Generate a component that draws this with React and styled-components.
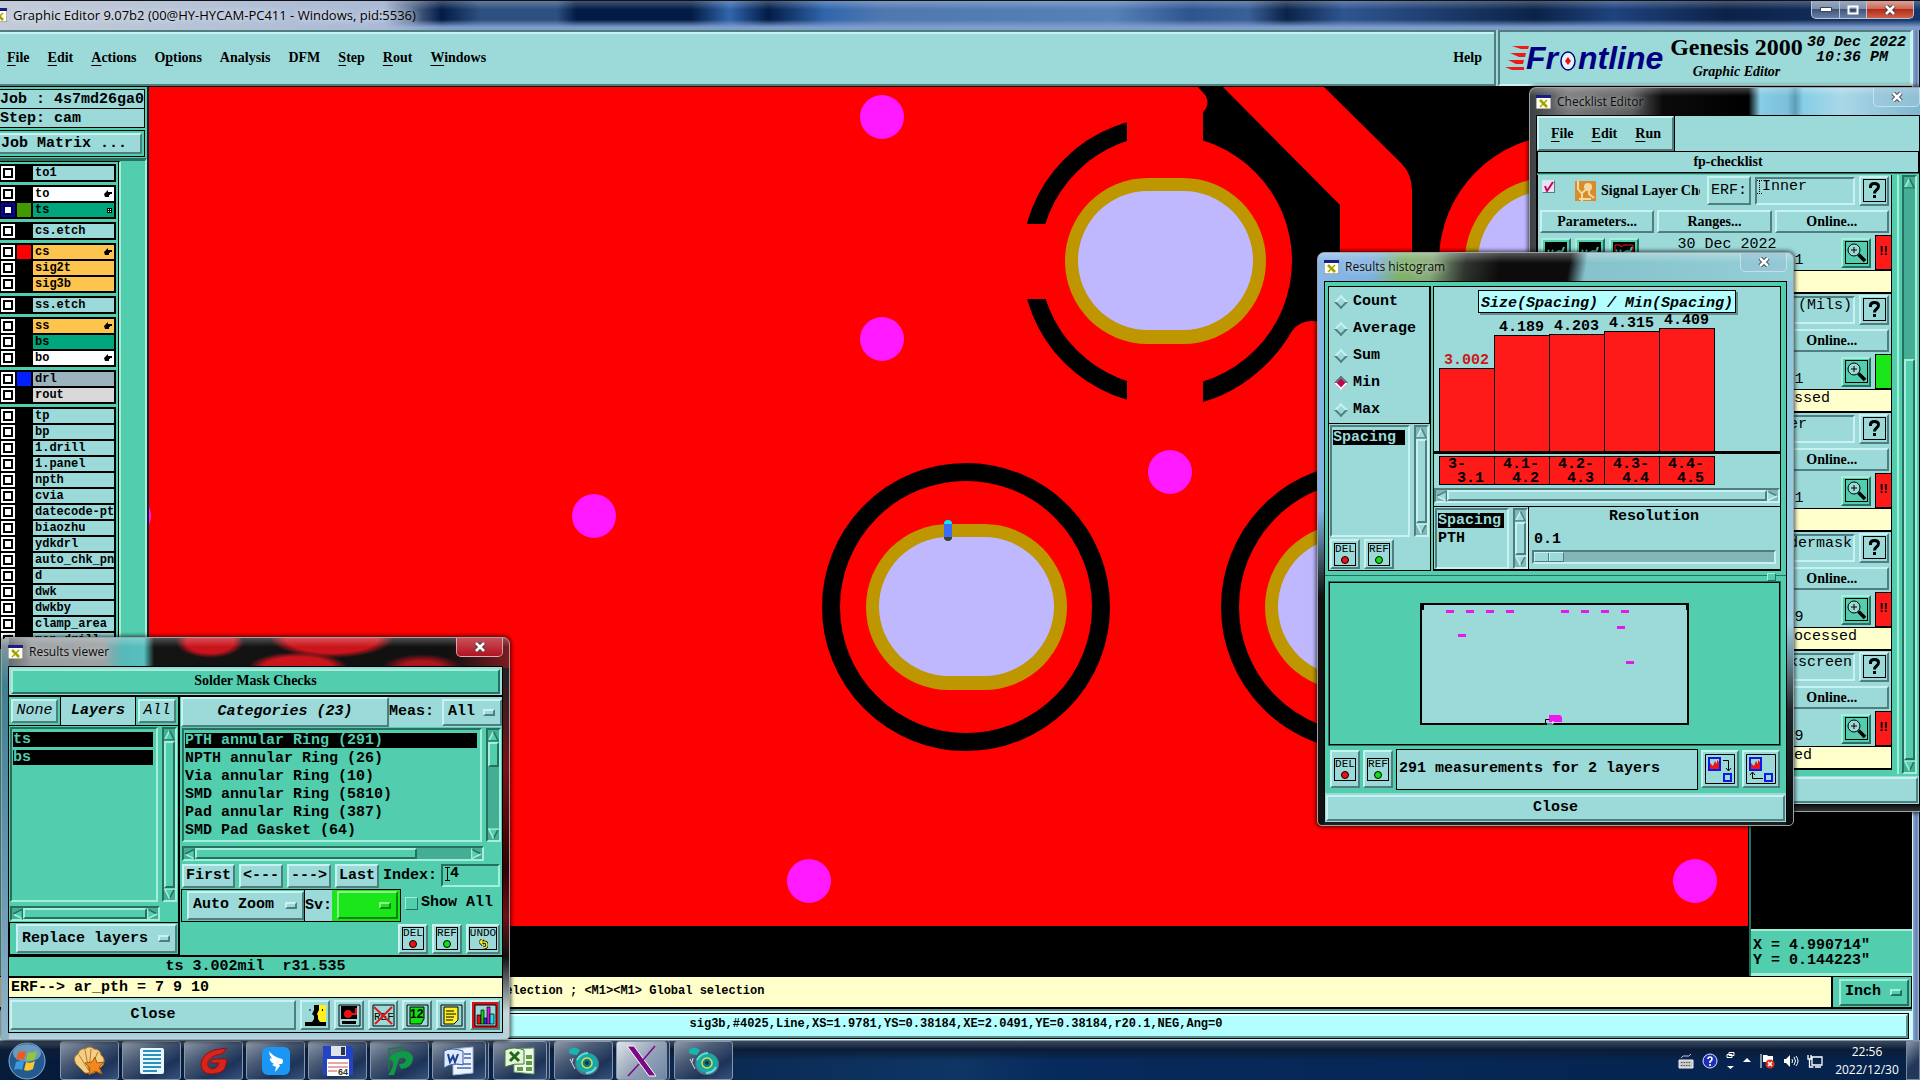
import React from "react";
import styled, { createGlobalStyle, css } from "styled-components";

const SERIF = `"Liberation Serif", serif`;
const MONO = `"Liberation Mono", monospace`;
const UI = `"Open Sans", "Noto Sans", sans-serif`;

const tones = {
  cyan: { bg: "#9cdada", light: "#c8f2f1", dark: "#507e7e", trough: "#83b7b7" },
  green: { bg: "#52cdae", light: "#a3efda", dark: "#27705f", trough: "#45ad93" },
  lime: { bg: "#1ae61a", light: "#8df58d", dark: "#0c860c", trough: "#13b313" },
  ice: { bg: "#b3ffff", light: "#e2ffff", dark: "#5f8f8f", trough: "#8fd0d0" }
};

const tone = p => tones[p.$tone || "cyan"];

const bevel = css`
  background: ${p => tone(p).bg};
  border: 2px solid;
  border-color: ${p =>
    p.$in
      ? `${tone(p).dark} ${tone(p).light} ${tone(p).light} ${tone(p).dark}`
      : `${tone(p).light} ${tone(p).dark} ${tone(p).dark} ${tone(p).light}`};
`;

const mono = css`
  font: bold 15px/18px ${MONO};
`;

const serif = css`
  font: bold 14px/18px ${SERIF};
`;

const GlobalStyle = createGlobalStyle`
  * { box-sizing: border-box; }
  body { margin: 0; overflow: hidden; background: #000; color: #000; }
  button, input, select { margin: 0; padding: 0; color: inherit; font: inherit; border-radius: 0; }
  ul { list-style: none; margin: 0; padding: 0; }
  svg { display: block; flex: none; }
`;

/* ---------- shared controls ---------- */

const Button = styled.button`
  ${bevel};
  ${mono};
  font-style: ${p => (p.$italic ? "italic" : "normal")};
  font-weight: ${p => (p.$thin ? "normal" : "bold")};
  flex: ${p => (p.$w ? "none" : 1)};
  width: ${p => (p.$w ? `${p.$w}px` : "auto")};
  height: ${p => (p.$h ? `${p.$h}px` : "auto")};
  white-space: nowrap;
  display: flex;
  align-items: center;
  justify-content: center;
`;

const SerifButton = styled(Button)`
  ${serif};
`;

const Face = styled.span`
  display: flex;
  flex-direction: column;
  align-items: center;
  width: ${p => (p.$wide ? 28 : 22)}px;
  height: 23px;
  border: 1px solid #000;
  font: 11px/11px ${MONO};
`;

const Dot = styled.i`
  width: 8px;
  height: 8px;
  margin-top: 1px;
  border: 1px solid #000;
  border-radius: 50%;
  background: ${p => p.$color};
`;

function DelButton({ h = 30 }) {
  return (
    <Button $w={30} $h={h}>
      <Face>
        DEL
        <Dot $color="#f01010" />
      </Face>
    </Button>
  );
}

function RefButton({ h = 30 }) {
  return (
    <Button $w={30} $h={h}>
      <Face>
        REF
        <Dot $color="#10e010" />
      </Face>
    </Button>
  );
}

const OptionBox = styled.label`
  ${bevel};
  ${mono};
  display: flex;
  align-items: center;
  gap: 6px;
  padding: 0 5px 0 4px;
  flex: ${p => (p.$w ? "none" : 1)};
  width: ${p => (p.$w ? `${p.$w}px` : "auto")};
  height: ${p => p.$h}px;

  select {
    flex: 1;
    min-width: 0;
    appearance: none;
    border: 0;
    background: none;
  }
`;

const Nub = styled.i`
  ${bevel};
  width: 12px;
  height: 7px;
  flex: none;
`;

function Option({ value, w, h, tone: t, name }) {
  return (
    <OptionBox $w={w} $h={h} $tone={t}>
      <select aria-label={name}>
        <option>{value}</option>
      </select>
      <Nub $tone={t} />
    </OptionBox>
  );
}

const ScrollBox = styled.div`
  ${bevel};
  background: ${p => tone(p).trough};
  display: flex;
  flex: none;
  flex-direction: ${p => (p.$flat ? "row" : "column")};
  ${p => (p.$flat ? "height: 15px" : "width: 15px")};
`;

const Rail = styled.div`
  flex: 1;
  display: flex;
  min-height: 0;
  flex-direction: ${p => (p.$flat ? "row" : "column")};
  &::before {
    content: "";
    flex: ${p => p.$before};
  }
  &::after {
    content: "";
    flex: ${p => p.$after};
  }
`;

const Thumb = styled.div`
  ${bevel};
  flex: ${p => p.$size};
`;

const arrows = { up: 0, right: 90, down: 180, left: 270 };

function Arrow({ dir, t }) {
  const c = tones[t];
  const flip = dir === "down" || dir === "right";
  return (
    <svg width="11" height="12" viewBox="0 0 12 12">
      <g transform={`rotate(${arrows[dir]} 6 6)`}>
        <path d="M6 0L12 12H0z" fill={c.bg} />
        <path d="M6 1L1 11" stroke={flip ? c.dark : c.light} strokeWidth="1.6" />
        <path d="M6 1L11 11" stroke={flip ? c.light : c.dark} strokeWidth="1.6" />
        <path d="M0 11.3H12" stroke={flip ? c.light : c.dark} strokeWidth="1.4" />
      </g>
    </svg>
  );
}

function Scroll({ flat, t = "cyan", before = 0, size = 1, after = 0 }) {
  return (
    <ScrollBox $in $flat={flat} $tone={t}>
      <Arrow dir={flat ? "left" : "up"} t={t} />
      <Rail $flat={flat} $before={before} $after={after}>
        <Thumb $tone={t} $size={size} />
      </Rail>
      <Arrow dir={flat ? "right" : "down"} t={t} />
    </ScrollBox>
  );
}

const List = styled.ul`
  ${bevel};
  ${mono};
  flex: 1;
  min-width: 0;
  padding: 2px 3px 2px 1px;
  overflow: hidden;
  white-space: pre;
`;

const ListRow = styled.li`
  height: 18px;
  padding-top: 1px;
  line-height: 16px;
  span {
    display: block;
    height: 15px;
    line-height: 15px;
    background: ${p => (p.$on ? "#000" : "none")};
    color: ${p => (p.$on ? tone(p).bg : "#000")};
  }
`;

/* ---------- glass windows ---------- */

const Glass = styled.section`
  position: absolute;
  left: ${p => p.$x}px;
  top: ${p => p.$y}px;
  width: ${p => p.$w}px;
  height: ${p => p.$h}px;
  padding: 0 6px 6px;
  display: flex;
  flex-direction: column;
  border: 1px solid #9aa4a8;
  border-radius: 7px 7px 5px 5px;
  box-shadow: 0 0 4px 1px rgba(0, 0, 0, 0.7);
  background: ${p => p.$glass};
`;

const GlassTitle = styled.header`
  display: flex;
  align-items: center;
  height: ${p => p.$h}px;
  flex: none;
  gap: 6px;
  font: 12px/20px ${UI};
  color: #0c0c0c;

  span {
    flex: 1;
    text-shadow: 0 0 6px rgba(255, 255, 255, 0.55), 0 0 9px rgba(255, 255, 255, 0.5);
  }
`;

const GlassClose = styled.button`
  align-self: flex-start;
  display: flex;
  align-items: center;
  justify-content: center;
  width: 47px;
  height: 19px;
  border: 1px solid rgba(230, 240, 245, 0.6);
  border-top: 0;
  border-radius: 0 0 5px 5px;
  background: ${p => p.$bg};
`;

const Cross = () => (
  <svg width="12" height="10" viewBox="0 0 12 10">
    <path d="M2 1l8 8M10 1l-8 8" stroke="#333b44" strokeWidth="4.4" />
    <path d="M2 1l8 8M10 1l-8 8" stroke="#fff" strokeWidth="2.6" />
  </svg>
);

const XIcon = () => (
  <svg width="15" height="14" viewBox="0 0 15 14">
    <rect width="15" height="14" fill="#fffff0" stroke="#666" />
    <rect width="15" height="3" fill="#1b1b88" />
    <path d="M4 5l7 7" stroke="#a2a300" strokeWidth="2.6" />
    <path d="M11 5l-7 7" stroke="#a2a300" strokeWidth="1.4" />
  </svg>
);

const Client = styled.div`
  flex: 1;
  min-height: 0;
  display: flex;
  flex-direction: column;
  border: 1px solid #000;
  background: ${p => tone(p).bg};
`;

/* ---------- main window ---------- */

const Desktop = styled.main`
  position: relative;
  display: flex;
  flex-direction: column;
  min-height: 100vh;
  background: #52cdae;
`;

const TitleBar = styled.header`
  display: flex;
  align-items: flex-start;
  height: 30px;
  flex: none;
  padding-right: 6px;
  border-top: 1px solid #111;
  font: 13px/28px ${UI};
  background: linear-gradient(90deg, #c3cbd8 0, #a9bad6 20%, rgba(120, 150, 195, 0) 23%),
    linear-gradient(180deg, rgba(255, 255, 255, 0.25) 0, rgba(255, 255, 255, 0) 30%, rgba(0, 0, 0, 0) 65%, #7f9dcb 90%),
    linear-gradient(90deg, #021c46 23%, #2d5080 25%, #2d5080 29%, #021c46 30%, #021c46 36%, #3166ad 38%, #021c46 40%, #3166ad 43%, #4f78b0 46%, #5680b8 58%, #2f5590 62%, #3a6098 65%, #0a2348 67%, #2f5590 70%, #0a2348 80%, #1f437e 84%, #0c2248 90%, #16376b 100%);
`;

const TitleText = styled.span`
  flex: 1;
  margin-left: 6px;
  text-shadow: 0 0 6px #fff;
`;

const TitleIcon = styled.span`
  width: 7px;
  height: 14px;
  margin-top: 7px;
  overflow: hidden;
  display: flex;
  justify-content: flex-end;
`;

const Caption = styled.button`
  display: flex;
  align-items: center;
  justify-content: center;
  width: ${p => p.$w}px;
  height: 18px;
  border: 1px solid #b9c4d4;
  border-top: 0;
  border-left: ${p => (p.$first ? "1px solid #b9c4d4" : 0)};
  border-radius: 0 0 ${p => (p.$close ? "5px" : 0)} ${p => (p.$first ? "5px" : 0)};
  background: ${p =>
    p.$close
      ? "linear-gradient(#dba196 0, #cc6a58 45%, #b32a16 50%, #d0604a)"
      : "linear-gradient(#9aa9c0 0, #7d8fac 45%, #3d547b 50%, #6b80a2)"};
`;

const Body = styled.div`
  flex: 1;
  display: flex;
  min-height: 0;
`;

const WindowEdge = styled.div`
  width: 8px;
  flex: none;
  border-left: 1px solid #d0f5f5;
  border-right: 1px solid #111;
  background: linear-gradient(90deg, #8ea9cf, #5f7fb4 60%, #a8bcdc);
`;

const Workspace = styled.div`
  flex: 1;
  min-width: 0;
  display: flex;
  flex-direction: column;
`;

const TopStrip = styled.div`
  display: flex;
  height: 57px;
  flex: none;
  gap: 2px;
  background: #9cdada;
  border-bottom: 1px solid #000;
`;

const MenuBar = styled.nav`
  ${bevel};
  ${serif};
  flex: 1;
  display: flex;
  align-items: center;
  gap: 18px;
  padding: 0 12px 0 7px;
  border-left: 0;
  border-top: 2px solid #507e7e;
  box-shadow: inset 0 2px 0 #c8f2f1;
`;

const MenuItem = styled.button`
  ${serif};
  border: 0;
  background: none;
  margin-left: ${p => (p.$end ? "auto" : 0)};
  u {
    text-underline-offset: 3px;
  }
`;

const Brand = styled.div`
  ${bevel};
  display: flex;
  align-items: flex-start;
  width: 414px;
  padding: 3px 4px 0 4px;
`;

const Product = styled.div`
  flex: 1;
  text-align: center;
  font: bold 24px/24px ${SERIF};
  white-space: nowrap;
  em {
    display: block;
    font: italic bold 14px/26px ${SERIF};
  }
`;

const Stamp = styled.time`
  font: italic bold 15px/15px ${MONO};
  white-space: pre;
`;

const Middle = styled.div`
  flex: 1;
  display: flex;
  min-height: 0;
`;

const Side = styled.aside`
  width: 149px;
  flex: none;
  display: flex;
  flex-direction: column;
  padding-top: 2px;
  border-right: 2px solid #123;
  background: #52cdae;
  overflow: hidden;
`;

const JobInfo = styled.div`
  ${mono};
  height: 20px;
  line-height: 19px;
  flex: none;
  margin: 0 2px -1px 0;
  border: 1px solid #000;
  border-left: 0;
  background: #9cdada;
  white-space: pre;
`;

const MatrixSlot = styled.div`
  display: flex;
  height: 27px;
  flex: none;
  margin: 3px 2px 1px 0;
  padding: 2px 2px 2px 0;
  border: 1px solid #000;
  border-left: 0;
  button {
    justify-content: flex-start;
    border-left: 0;
    padding-left: 1px;
  }
`;

const LayerPane = styled.div`
  flex: 1;
  min-height: 0;
  display: flex;
  border-top: 3px solid #27705f;
  border-right: 2px solid #a3efda;
`;

const LayerColumn = styled.div`
  width: 121px;
  display: flex;
  flex-direction: column;
  gap: 3px;
  padding: 2px 3px 0 0;
  border-top: 1px solid #000;
  border-right: 2px solid #a3efda;
  box-shadow: inset -1px 0 0 #000;
`;

const LayerGroup = styled.ul`
  width: 116px;
  flex: none;
  display: flex;
  flex-direction: column;
  gap: 2px;
  padding: 2px 2px 2px 1px;
  background: #000;
`;

const LayerRow = styled.li`
  display: flex;
  gap: 2px;
  height: 14px;
  font: bold 12px/14px ${MONO};

  input {
    appearance: none;
    width: 14px;
    height: 14px;
    background: #fff;
    border: 2px solid #fff;
    box-shadow: inset 0 0 0 2px #000;
  }
  input:checked {
    border-color: #0404a8;
    box-shadow: inset 0 0 0 2px #000050;
  }
  label {
    flex: 1;
    min-width: 0;
    display: flex;
    align-items: center;
    justify-content: space-between;
    padding: 0 2px;
    overflow: hidden;
    white-space: nowrap;
    background: ${p => p.$bg};
  }
`;

const Swatch = styled.i`
  width: 14px;
  background: ${p => p.$color || "#000"};
`;

const CanvasArea = styled.div`
  flex: 1;
  min-width: 0;
  overflow: hidden;
  background: #f00;
`;

const Overview = styled.aside`
  width: 163px;
  flex: none;
  display: flex;
  flex-direction: column;
  background: #000;
  border-left: 2px solid #27705f;
`;

const Coords = styled.output`
  margin-top: auto;
  height: 47px;
  padding: 7px 2px 5px;
  border-top: 2px solid #a3efda;
  border-bottom: 3px solid #a3efda;
  background: #52cdae;
  font: bold 15px/15px ${MONO};
  white-space: pre;
`;

const Prompt = styled.div`
  display: flex;
  align-items: center;
  justify-content: space-between;
  height: 33px;
  flex: none;
  border: solid #000;
  border-width: 1px 1px 2px 0;
  background: #ffffcc;
  padding-left: 498px;
  font: bold 12px/18px ${MONO};
  white-space: pre;
`;

const PromptText = styled.span`
  padding-bottom: 2px;
`;

const UnitSlot = styled.div`
  display: flex;
  align-items: center;
  width: 80px;
  height: 30px;
  padding: 0 2px 0 6px;
  border-left: 2px solid #000;
  background: #52cdae;
`;

const Info = styled.div`
  height: 31px;
  flex: none;
  padding: 3px 4px;
  background: #c6ffff;
  border-top: 2px solid #5f8f8f;
`;

const InfoText = styled.p`
  ${bevel};
  margin: 0;
  height: 24px;
  outline: 1px solid #000;
  text-align: center;
  font: bold 12px/16px ${MONO};
`;

/* ---------- results viewer ---------- */

const Heading = styled.div`
  padding: 2px;
  height: 30px;
  flex: none;
  background: #9cdada;
  border-bottom: 2px solid #000;
`;

const HeadingText = styled.h2`
  ${bevel};
  ${serif};
  margin: 0;
  height: 25px;
  line-height: 19px;
  text-align: center;
`;

const Split = styled.div`
  display: flex;
  flex: 1;
  min-height: 0;
  gap: 1px;
`;

const LayersSide = styled.div`
  width: 171px;
  flex: none;
  display: flex;
  flex-direction: column;
  border-right: 2px solid #000;
`;

const LayersHead = styled.div`
  display: flex;
  height: 29px;
  flex: none;
  border-bottom: 1px solid #000;
  > div {
    display: flex;
    padding: 2px;
  }
  > h3 {
    ${mono};
    flex: 1;
    margin: 0;
    border: solid #000;
    border-width: 0 1px;
    background: #9cdada;
    font-style: italic;
    line-height: 27px;
    text-align: center;
  }
`;

const ListArea = styled.div`
  flex: 1;
  min-height: 0;
  display: flex;
  gap: 4px;
  padding: 1px;
`;

const FlatScroll = styled.div`
  padding: ${p => (p.$tall ? "3px 18px 2px 1px" : "3px 18px 1px 1px")};
`;

const ReplaceSlot = styled.div`
  display: flex;
  height: 33px;
  flex: none;
  padding: 1px 1px 1px 6px;
  border: 1px solid #000;
  border-right: 0;
`;

const CategorySide = styled.div`
  flex: 1;
  min-width: 0;
  display: flex;
  flex-direction: column;
`;

const Row = styled.div`
  ${mono};
  display: flex;
  align-items: center;
  flex: none;
  height: ${p => p.$h}px;
  gap: ${p => p.$gap || 0}px;
  padding: ${p => p.$pad || "0"};
  justify-content: ${p => p.$justify || "flex-start"};
  background: ${p => (p.$bg ? p.$bg : "none")};
`;

const Grow = styled.span`
  flex: 1;
`;

const IndexField = styled.label`
  display: flex;
  align-items: center;
  flex: 1;
  gap: 4px;
`;

const FieldBox = styled.span`
  ${bevel};
  display: flex;
  flex: 1;
  min-width: 0;
  height: ${p => p.$h}px;
  padding-left: ${p => (p.$tight ? 0 : 2)}px;
  input {
    flex: 1;
    width: 0;
    height: 16px;
    border: 0;
    background: none;
  }
`;

const Caret = ({ dotted }) => (
  <svg width="5" height="16" viewBox="0 0 5 16">
    <path d="M0 1.5h5M0 14.5h5M2.5 2v12" stroke="#000" strokeDasharray={dotted ? "1 1" : "none"} />
  </svg>
);

const ZoomSlot = styled.div`
  display: flex;
  align-items: center;
  height: 33px;
  border: 1px solid #000;
  padding-left: 5px;
`;

const SvLabel = styled.span`
  align-self: stretch;
  width: 28px;
  border-left: 1px solid #000;
  background: #9cdada;
  line-height: 31px;
`;

const SvColor = styled.span`
  align-self: stretch;
  display: flex;
  align-items: center;
  width: 68px;
  padding: 0 2px 0 5px;
  background: #1ae61a;
`;

const Check = styled.label`
  display: flex;
  align-items: center;
  gap: 3px;
  padding-bottom: 4px;
  white-space: pre;
`;

const TickBox = styled.input`
  ${bevel};
  appearance: none;
  border-width: 1px;
  width: 13px;
  height: 13px;
`;

const StatusLine = styled.div`
  ${mono};
  height: 21px;
  line-height: 19px;
  flex: none;
  border-top: 2px solid #000;
  padding: 0 2px;
  background: ${p => p.$bg};
  text-align: ${p => p.$align || "left"};
  white-space: pre;
`;

const IconPad = styled.button`
  ${bevel};
  display: flex;
  align-items: center;
  justify-content: center;
  width: 30px;
  height: 30px;
  flex: none;
  background: ${p => (p.$active ? "#d81018" : tone(p).bg)};
`;

const Tools = styled.div`
  display: flex;
  align-items: center;
  gap: 4px;
  height: 35px;
  flex: none;
  padding: 0 2px 0 1px;
  border-top: 1px solid #000;
  background: #9cdada;
`;

/* ---------- histogram ---------- */

const HistBody = styled.div`
  display: flex;
  height: 294px;
  flex: none;
  gap: 2px;
  padding: 4px 5px 4px 3px;
  border-bottom: 1px solid #27705f;
`;

const HistSide = styled.div`
  width: 103px;
  display: flex;
  flex-direction: column;
  border: 1px solid #000;
  background: #9cdada;
`;

const Radios = styled.div`
  ${mono};
  height: 137px;
  flex: none;
  display: flex;
  flex-direction: column;
  padding-top: 1px;
  border-right: 1px solid #000;
  border-bottom: 1px solid #000;
`;

const Radio = styled.label`
  display: flex;
  align-items: center;
  gap: 7px;
  height: 27px;
  padding-left: 7px;
  input {
    ${bevel};
    appearance: none;
    width: 10px;
    height: 10px;
    transform: rotate(45deg);
    border-color: #c8f2f1 #507e7e #507e7e #c8f2f1;
  }
  input:checked {
    background: #c8004c;
    border-color: #507e7e #fff #fff #507e7e;
  }
`;

const HistMain = styled.div`
  flex: 1;
  min-width: 0;
  display: flex;
  flex-direction: column;
  border: 1px solid #000;
  border-bottom-width: 2px;
  background: #9cdada;
`;

const ChartTitle = styled.h3`
  align-self: center;
  margin: 3px 0 0 0;
  padding: 4px 2px 0;
  height: 23px;
  border: 1px solid #000;
  box-shadow: 2px 2px 0 #5f8f8f;
  background: #b3ffff;
  font: italic bold 15px/18px ${MONO};
  white-space: pre;
`;

const Bars = styled.div`
  flex: 1;
  display: flex;
  align-items: flex-end;
  padding-left: 5px;
  border-bottom: 3px solid #000;
`;

const BarColumn = styled.div`
  width: 55px;
  color: ${p => (p.$low ? "#c81818" : "#000")};
  text-align: center;
  font: bold 15px/15px ${MONO};
`;

const Bar = styled.div`
  margin-right: -1px;
  border: 1px solid #000;
  border-bottom: 0;
  background: #ff1a1a;
`;

const Ranges = styled.div`
  display: flex;
  height: 31px;
  padding: 2px 0 0 5px;
`;

const Range = styled.div`
  width: 55px;
  height: 29px;
  box-shadow: 1px 0 0 #000;
  border: 1px solid #000;
  border-right: 0;
  overflow: hidden;
  padding: 1px 0 0 8px;
  background: #ff1a1a;
  font: bold 15px/14px ${MONO};
  white-space: pre;
`;

const HistLower = styled.div`
  display: flex;
  height: 63px;
  flex: none;
  border-top: 1px solid #000;
`;

const ShortList = styled.div`
  display: flex;
  gap: 4px;
  width: 94px;
  padding: 1px 0 0 1px;
`;

const Wide = styled.div`
  flex: 1;
`;

const Resolution = styled.div`
  ${mono};
  flex: 1;
  display: flex;
  flex-direction: column;
  padding: 1px 4px 0 3px;
  border-left: 1px solid #000;
  label {
    text-align: center;
  }
  output {
    padding-left: 2px;
    margin: 5px 0 1px;
  }
  input {
    ${bevel};
    appearance: none;
    width: 100%;
    height: 14px;
    background: #83b7b7;
    border-color: #507e7e #c8f2f1 #c8f2f1 #507e7e;
  }
  input::-webkit-slider-thumb {
    appearance: none;
    width: 30px;
    height: 10px;
    border: 1px solid;
    border-color: #c8f2f1 #507e7e #507e7e #c8f2f1;
    background: linear-gradient(90deg, #9cdada 13px, #507e7e 13px, #507e7e 14px, #c8f2f1 14px, #c8f2f1 15px, #9cdada 15px);
  }
`;

const Sash = styled.div`
  height: 8px;
  flex: none;
  display: flex;
  justify-content: flex-end;
  padding-right: 10px;
  margin-top: -3px;
`;

const Knob = styled.b`
  ${bevel};
  border-width: 1px;
  width: 9px;
  height: 8px;
`;

const MapBox = styled.div`
  height: 163px;
  flex: none;
  display: flex;
  justify-content: center;
  align-items: center;
  margin: 1px 6px 0 4px;
  border: 1px solid #000;
  outline: 1px solid #27705f;
`;

const Measure = styled.output`
  ${mono};
  flex: 1;
  height: 41px;
  border: 1px solid #000;
  background: #9cdada;
  line-height: 37px;
  padding-left: 2px;
`;

/* ---------- checklist ---------- */

const ChecklistGlass = styled(Glass)`
  padding-right: 0;
  border-right: 0;
  border-radius: 7px 0 0 5px;
`;

const CheckMenu = styled.nav`
  ${bevel};
  display: flex;
  gap: 18px;
  align-items: center;
  width: 137px;
  height: 35px;
  flex: none;
  padding-left: 12px;
  outline: 1px solid #000;
`;

const ListName = styled.h2`
  ${serif};
  height: 22px;
  flex: none;
  margin: 0;
  border: 1px solid #000;
  line-height: 20px;
  text-align: center;
`;

const Cards = styled.div`
  flex: 1;
  min-height: 0;
  display: flex;
  padding: 1px 2px 2px 0;
  background: #52cdae;
  border-top: 1px solid #27705f;
`;

const CardColumn = styled.div`
  flex: 1;
  min-width: 0;
  margin-right: 3px;
  padding-right: 5px;
  border-right: 2px solid #a3efda;
`;

const Card = styled.article`
  display: flex;
  flex-direction: column;
  height: 119px;
  border: solid #000;
  border-width: 0 1px 2px 1px;
  background: #9cdada;
`;

const CardHead = styled.div`
  ${serif};
  display: flex;
  align-items: center;
  gap: 4px;
  height: 31px;
  padding: 0 2px 0 4px;
  white-space: nowrap;
`;

const CardName = styled.label`
  display: flex;
  flex: 1;
  align-items: center;
  gap: 5px;
  min-width: 0;
  margin-right: 3px;
  overflow: hidden;
`;

const Tick = styled.span`
  position: relative;
  display: flex;
  margin: 0 15px 8px 0;
  input {
    ${bevel};
    appearance: none;
    border-width: 1px;
    width: 13px;
    height: 13px;
    background: #f2dff0;
  }
  svg {
    position: absolute;
    left: 2px;
    top: 1px;
  }
`;

const ErfInput = styled.input`
  && {
    width: 91px;
    flex: none;
    font: 15px/16px ${MONO};
  }
`;

const CardButtons = styled.div`
  display: grid;
  grid-template-columns: repeat(3, 1fr);
  gap: 3px;
  padding: 4px 2px 2px;
`;

const CardRun = styled.div`
  display: flex;
  height: 35px;
  gap: 4px;
  padding-left: 3px;
  align-items: center;
`;

const RunDate = styled.p`
  flex: 1;
  margin: 0 22px 0 -4px;
  text-align: center;
  font: 15px/16px ${MONO};
  white-space: pre;
`;

const Flag = styled.strong`
  width: 16px;
  align-self: stretch;
  border: 1px solid #000;
  border-right: 0;
  background: ${p => p.$color};
  font: bold 13px/30px "Liberation Sans", sans-serif;
  text-align: center;
`;

const CardNote = styled.p`
  flex: 1;
  margin: 0;
  padding-left: 6px;
  border-top: 1px solid #000;
  background: #ffffcc;
  text-align: center;
  font: 15px/18px ${MONO};
`;

/* ---------- taskbar ---------- */

const Taskbar = styled.footer`
  display: flex;
  align-items: stretch;
  height: 40px;
  flex: none;
  border-top: 1px solid #8a95a5;
  background: linear-gradient(180deg, #3a4a60 0, #0c1c36 22%, rgba(0, 20, 50, 0) 50%),
    linear-gradient(90deg, #061a3a 0, #0a2850 35%, #0e3564 50%, #072a5c 55%, #05224b 100%);
`;

const Start = styled.button`
  width: 54px;
  margin-right: 6px;
  border: 0;
  background: none;
  display: flex;
  justify-content: center;
  align-items: center;
`;

const Tasks = styled.nav`
  flex: 1;
  display: flex;
  gap: 3px;
`;

const Task = styled.button`
  display: flex;
  align-items: center;
  justify-content: center;
  width: ${p => p.$w || 59}px;
  border: 1px solid #8896aa;
  border-radius: 3px;
  background: ${p =>
    p.$active
      ? "linear-gradient(135deg, #dfe4ea, #96a5b8 50%, #6f86a5)"
      : "linear-gradient(150deg, #8c98a8 0, #4b5c76 35%, #1d3358 70%, #35527c)"};
  margin-right: ${p => (p.$stack ? 4 : 0)}px;
  box-shadow: ${p => (p.$stack ? "2px 0 0 #24395a, 3px 0 0 #8896aa" : "none")};
`;

const Tray = styled.div`
  display: flex;
  align-items: center;
  gap: 8px;
  color: #fff;
`;

const TrayEnd = styled.div`
  align-self: stretch;
  display: flex;
  align-items: center;
  gap: 3px;
`;

const Clock = styled.time`
  width: 72px;
  font: 12px/18px ${UI};
  text-align: center;
`;

const ShowDesktop = styled.button`
  align-self: stretch;
  width: 14px;
  border: 1px solid #7787a0;
  background: linear-gradient(135deg, #8995a6, #22375a 60%);
`;

/* ---------- data ---------- */

const CYAN = "#9cdada";
const groups = [
  [{ name: "to1" }],
  [{ name: "to", bg: "#fff", hand: true }, { name: "ts", bg: "#00a67c", on: true, color: "#409a00", cell: true }],
  [{ name: "cs.etch" }],
  [{ name: "cs", bg: "#fdc44e", color: "#f00", hand: true }, { name: "sig2t", bg: "#fdc44e" }, { name: "sig3b", bg: "#fdc44e" }],
  [{ name: "ss.etch" }],
  [{ name: "ss", bg: "#fdc44e", hand: true }, { name: "bs", bg: "#00a67c" }, { name: "bo", bg: "#fff", hand: true }],
  [{ name: "drl", bg: "#9bb3bd", color: "#0020ff" }, { name: "rout", bg: "#d9d9d9" }],
  [
    "tp", "bp", "1.drill", "1.panel", "npth", "cvia", "datecode-pto", "biaozhu",
    "ydkdrl", "auto_chk_pnl", "d", "dwk", "dwkby", "clamp_area", "map_drill"
  ].map(name => ({ name }))
];

const categories = [
  "PTH annular Ring (291)",
  "NPTH annular Ring (26)",
  "Via annular Ring (10)",
  "SMD annular Ring (5810)",
  "Pad annular Ring (387)",
  "SMD Pad Gasket (64)"
];

const bars = [
  { value: "3.002", height: 83, range: "3-\n 3.1", low: true },
  { value: "4.189", height: 116, range: "4.1-\n 4.2" },
  { value: "4.203", height: 117, range: "4.2-\n 4.3" },
  { value: "4.315", height: 120, range: "4.3-\n 4.4" },
  { value: "4.409", height: 123, range: "4.4-\n 4.5" }
];

const checks = [
  { title: "Signal Layer Checks", erf: "Inner", took: "1", flag: "#ff1a1a", note: "" },
  { title: "Drill Checks", erf: "Fab (Mils)", took: "1", flag: "#1ae61a", note: "All layers were processed" },
  { title: "Signal Layer Checks", erf: "Outer", took: "1", flag: "#ff1a1a", note: "" },
  { title: "Solder Mask Checks", erf: "Soldermask", took: "9", flag: "#ff1a1a", note: "All of the layers got processed" },
  { title: "Silk Screen Checks", erf: "Silkscreen", took: "9", flag: "#ff1a1a", note: "All layers: processed" }
];

/* ---------- drawings ---------- */

function Hand() {
  return (
    <svg width="8" height="8" viewBox="0 0 8 8">
      <path d="M0 4l3-3 1-1v2h4v2H6v1H5v2H1z" fill="#000" />
    </svg>
  );
}

function Cell() {
  return (
    <svg width="5" height="5" viewBox="0 0 5 5">
      <rect width="5" height="5" fill="#000" />
      <path d="M1 1h1v1H1zM3 1h1v1H3zM1 3h1v1H1zM3 3h1v1H3z" fill="#fff" />
    </svg>
  );
}

function Frontline() {
  return (
    <svg width="162" height="44" viewBox="1503 35 162 44">
      <g fill="#f01818">
        <path d="M1511 46h17l-1 3h-7zM1509 53h16l-1 4h-6zM1507 60h16l-1 4h-7zM1504 67h19v3h-12z" />
      </g>
      <g fill="#000080" fontFamily="Liberation Sans, sans-serif" fontSize="32" fontWeight="bold" fontStyle="italic">
        <text x="1525" y="69">Fr</text>
        <text x="1577" y="69">ntline</text>
      </g>
      <ellipse cx="1567" cy="61" rx="7" ry="9" fill="#dff5f8" stroke="#000080" strokeWidth="1.5" />
      <path d="M1567 57l3 4-3 4-3-4z" fill="#f01010" />
    </svg>
  );
}

function Pad({ x, y }) {
  return (
    <g>
      <rect x={x - 100} y={y - 83} width="201" height="166" rx="83" fill="#bd9600" />
      <rect x={x - 87} y={y - 70} width="175" height="139" rx="70" fill="#bfb8ff" />
    </g>
  );
}

function Board() {
  return (
    <svg width="100%" height="100%" viewBox="149 87 1600 889" preserveAspectRatio="xMinYMin slice">
      <rect x="149" y="87" width="1600" height="889" fill="#000" />
      <rect x="149" y="87" width="1599" height="839" fill="#f00" />
      <circle cx="1166" cy="261" r="135" fill="none" stroke="#000" strokeWidth="18" />
      <path d="M1198 87H1748V322H1320Q1302 318 1292 331L1250 350L1203 360V112Q1210 106 1206 96z" fill="#000" />
      <path d="M1203 399V250H1292V331Q1258 386 1203 402z" fill="#000" />
      <circle cx="1166" cy="261" r="126" fill="#f00" />
      <rect x="1127" y="100" width="76" height="320" fill="#f00" />
      <rect x="1010" y="224" width="70" height="75" fill="#f00" />
      <path d="M1223 87H1324L1401 163Q1412 174 1412 190V330H1340V205z" fill="#f00" />
      <circle cx="1565" cy="261" r="126" fill="#f00" />
      <circle cx="966" cy="607" r="135" fill="none" stroke="#000" strokeWidth="18" />
      <circle cx="1365" cy="607" r="135" fill="none" stroke="#000" strokeWidth="18" />
      <Pad x={1165} y={261} />
      <Pad x={1565} y={261} />
      <Pad x={966} y={607} />
      <Pad x={1365} y={607} />
      <g fill="#ff1aff">
        <circle cx="882" cy="117" r="22" />
        <circle cx="882" cy="339" r="22" />
        <circle cx="1170" cy="472" r="22" />
        <circle cx="594" cy="516" r="22" />
        <circle cx="809" cy="881" r="22" />
        <circle cx="1695" cy="881" r="22" />
        <circle cx="129" cy="516" r="22" />
      </g>
      <rect x="944" y="522" width="8" height="17" fill="#3a6cf5" />
      <path d="M944 524q0-4 4-4t4 4z" fill="#10e8f0" />
      <path d="M944 537h8q0 4-4 4t-4-4z" fill="#3a4230" />
    </svg>
  );
}

const dashes = [
  [1446, 610], [1466, 610], [1486, 610], [1506, 610], [1561, 610], [1581, 610],
  [1601, 610], [1621, 610], [1617, 626], [1458, 634], [1626, 661]
];

function PanelMap() {
  return (
    <svg width="272" height="126" viewBox="1419 601 272 126">
      <rect x="1421" y="604" width="267" height="120" fill="#9cdada" stroke="#000" strokeWidth="2" />
      <path d="M1421 605h3v5h-3zM1686 605h3v5h-3z" fill="#000" />
      {dashes.map(([x, y]) => (
        <rect key={`${x}-${y}`} x={x} y={y} width="8" height="3" fill="#e619e6" />
      ))}
      <path d="M1549 715h11l2 2v5h-13z" fill="#f018f0" />
      <path d="M1545.5 724v-4.5h4" fill="none" stroke="#000" />
      <path d="M1547 724h6v-3" fill="none" stroke="#fff" />
    </svg>
  );
}

function Magnifier() {
  return (
    <svg width="23" height="23" viewBox="0 0 23 23">
      <rect x=".5" y=".5" width="22" height="22" fill="#52cdae" stroke="#000" />
      <circle cx="9" cy="9" r="6" fill="#9cdada" stroke="#000" />
      <path d="M6 9h6M9 6v6" stroke="#000" />
      <path d="M13.5 13.5l6.5 6.5" stroke="#000" strokeWidth="3.5" />
    </svg>
  );
}

function Question() {
  return (
    <svg width="23" height="23" viewBox="0 0 23 23">
      <rect x=".5" y=".5" width="22" height="22" fill="none" stroke="#000" />
      <path d="M7.5 9V7.5q0-3 4-3t4 3q0 2-2 3.5t-2 3.5" fill="none" stroke="#000" strokeWidth="3" />
      <path d="M10 16h3v3h-3z" />
    </svg>
  );
}

function Runner({ framed }) {
  return (
    <svg width="22" height="22" viewBox="0 0 22 22">
      <rect width="22" height="22" fill="#000" />
      <path d="M2 9V3h5l1 2 3-2h9v7" fill="none" stroke={framed ? "#f01818" : "#000"} />
      <path d="M2 9h3M6 9h3M3.5 7.5v3M7.5 7.5v3" stroke="#52cdae" />
      <path d="M10 11l4-2 3 1 2-5M14 10l-3 6M9 17h4" fill="none" stroke="#52cdae" strokeWidth="2" />
    </svg>
  );
}

function SignalIcon() {
  return (
    <svg width="21" height="20" viewBox="0 0 21 20">
      <rect width="21" height="20" fill="#d98c2b" />
      <circle cx="13" cy="6" r="4" fill="#f6d9a0" />
      <path d="M3 0v8l4 5v7M7 12l6-5M14 9v4l5 4M4 18h12" fill="none" stroke="#f6d9a0" strokeWidth="2" />
    </svg>
  );
}

const toolArt = {
  faces: (
    <>
      <path d="M1 1h21v21H1z" fill="#000" />
      <path d="M1 1h9v5L8 10l2 2v3l-2 3H1z" fill="#9cdada" />
      <path d="M22 1h-7v5l-2 4 1 2v3l2 3h6z" fill="#ffee20" />
      <path d="M6 5v2M18.5 5v2" stroke="#000" />
    </>
  ),
  record: (
    <>
      <path d="M1 1h21v21H1z" fill="#9cdada" stroke="#000" />
      <path d="M3 2h16v13H3zM4 17h14v3H4z" fill="#000" />
      <circle cx="10" cy="10" r="4" fill="#f01010" />
      <path d="M13 10h5V4" stroke="#f01010" strokeWidth="2" fill="none" />
    </>
  ),
  noref: (
    <>
      <path d="M1 1h21v21H1z" fill="#9cdada" stroke="#000" />
      <text x="2" y="16" fontFamily="Liberation Mono, monospace" fontSize="11">REF</text>
      <path d="M2 3l18 17M20 3L3 20" stroke="#e01818" strokeWidth="2" />
    </>
  ),
  numbers: (
    <>
      <path d="M1 1h21v21H1z" fill="#9cdada" stroke="#000" />
      <path d="M4 3h14v12l-3 5H4z" fill="#10e010" stroke="#000" />
      <text x="4" y="14" fontFamily="Liberation Sans, sans-serif" fontWeight="bold" fontSize="12">12</text>
    </>
  ),
  note: (
    <>
      <path d="M1 1h21v21H1z" fill="#9cdada" stroke="#000" />
      <path d="M4 3h14v13l-4 4H4z" fill="#ffee20" stroke="#000" />
      <path d="M6 7h8M6 10h10M6 13h8M6 16h7" stroke="#000" />
    </>
  ),
  chart: (
    <>
      <path d="M1 1h21v21H1z" fill="#9cdada" stroke="#000" />
      <g stroke="#000" strokeWidth=".7">
        <path d="M3 11h4v9H3z" fill="#e01010" />
        <path d="M7 6h3v14H7z" fill="#10d020" />
        <path d="M10 14h3v6h-3z" fill="#2040f0" />
        <path d="M13 3h3v17h-3z" fill="#e010e0" />
        <path d="M16 10h4v10h-4z" fill="#20d8e8" />
      </g>
    </>
  )
};

function MoveIcon({ back }) {
  return (
    <svg width="30" height="30" viewBox="0 0 30 30">
      <path d="M.5.5h29v29H.5z" fill="none" stroke="#000" />
      <path d="M4 4h11v12H4z" fill="#9cdada" stroke="#1018e8" strokeWidth="2" />
      <path d="M5 15V9l3 3 2-5 2 3V6l2 2v7z" fill="#e81818" />
      <path d="M19 20h7v7h-7z" fill="#9cdada" stroke="#1018e8" strokeWidth="2" />
      {back ? (
        <path d="M17 24.5H6.5V19M4 21l2.5-3 2.5 3" fill="none" stroke="#000" />
      ) : (
        <path d="M18 6.5h5.5V16M21 14l2.5 3 2.5-3" fill="none" stroke="#000" />
      )}
    </svg>
  );
}

const Disc = () => (
  <svg width="32" height="32" viewBox="0 0 32 32">
    <ellipse cx="19" cy="19" rx="12" ry="11" fill="#5a6f86" />
    <ellipse cx="19" cy="18" rx="11" ry="10" fill="#17a8a8" />
    <path d="M9 15q4-7 11-7M28 22q-3 6-10 6" fill="none" stroke="#5fe0d4" strokeWidth="2" />
    <ellipse cx="19" cy="18" rx="5" ry="5" fill="#0a7f88" stroke="#e5dc50" strokeWidth="1.5" />
    <circle cx="19" cy="18" r="2" fill="#053a44" />
    <path d="M1 5q5-5 11 0l-3 5q-5 0-8-2z" fill="#15b5b0" />
    <path d="M2 14l5 10M5 13l-1 4" stroke="#d9dfe8" />
  </svg>
);

const taskIcons = {
  shell: (
    <svg width="34" height="32" viewBox="0 0 34 32">
      <path d="M3 19Q-1 12 5 9 7 3 12 4 17 0 21 4q6 0 7 6 5 4 2 10l-9 8H12z" fill="#f2cf85" stroke="#b77a28" />
      <path d="M16 26L6 10M16 26l-4-21M16 26l2-22M16 26l9-19" stroke="#b77a28" fill="none" />
      <path d="M22 12l2 6 7-1-5 5 3 7-7-3-6 4 1-7-5-5 7-1z" fill="#f08a20" stroke="#b4560c" />
    </svg>
  ),
  note: (
    <svg width="26" height="28" viewBox="0 0 26 28">
      <rect x="1" y="1" width="24" height="26" rx="2" fill="#e9f6fb" />
      <path d="M4 4h18M4 8h18M4 12h18M4 16h18M4 20h18M4 24h14" stroke="#2b90bc" strokeWidth="2" />
    </svg>
  ),
  g: (
    <svg width="30" height="30" viewBox="0 0 30 30">
      <path d="M28 2L15 4Q3 8 2 18q0 10 11 10 11-1 13-6l2-9H14l-3 4h9q-2 6-7 6-5-1-4-7 2-5 9-7l5-1z" fill="#d8241a" stroke="#8e120c" />
    </svg>
  ),
  bird: (
    <svg width="28" height="28" viewBox="0 0 28 28">
      <rect width="28" height="28" rx="6" fill="#1b96f5" />
      <path d="M7 4q3 5 13 8 2 2 0 5h-3l1 2-5 6 1-5-4-2 2-1Q7 14 8 11l2 1Q7 8 7 4z" fill="#fff" />
    </svg>
  ),
  floppy: (
    <svg width="32" height="32" viewBox="0 0 32 32">
      <path d="M1 1h28l2 2v27H1z" fill="#2444c8" />
      <path d="M9 1h15v10H9z" fill="#dfe3ea" />
      <path d="M19 2h4v8h-4z" fill="#2a3550" />
      <path d="M5 14h22v17H5z" fill="#fff" />
      <path d="M6 18h20M6 22h20M6 26h9" stroke="#d05050" />
      <text x="16" y="30" fontFamily="Liberation Sans, sans-serif" fontWeight="bold" fontSize="9" fill="#333">64</text>
    </svg>
  ),
  p: (
    <svg width="32" height="30" viewBox="0 0 32 30">
      <path d="M5 24V3L20 1v6" fill="none" stroke="#13803c" strokeWidth="1.5" />
      <path d="M5 13q3-7 13-8 11 0 11 8-1 9-12 10l-2-5q6 0 7-4-2-4-7-1l-5 16H4q6-8 5-13-2-3-4-3z" fill="#0f9a45" />
    </svg>
  ),
  word: (
    <svg width="32" height="30" viewBox="0 0 32 30">
      <path d="M10 3l20-2v26l-20 2z" fill="#eef3fb" stroke="#9ab0d6" />
      <path d="M21 8h7M21 12h7M14 18h14M14 22h14" stroke="#4268b2" strokeWidth="1.5" />
      <path d="M1 5Q8 1 20 5v14Q10 16 1 22z" fill="#dfe9fa" stroke="#2f58a8" />
      <path d="M5 8l2 8 3-6 2 6 3-8" fill="none" stroke="#1c3f90" strokeWidth="2" />
    </svg>
  ),
  excel: (
    <svg width="32" height="30" viewBox="0 0 32 30">
      <path d="M10 3l20-1v26l-20-2z" fill="#eef8ea" stroke="#79a76a" />
      <path d="M22 9h6v4h-6zM22 15h6v4h-6zM13 21h6v4h-6zM22 21h6v4h-6z" fill="#5f9c45" />
      <path d="M1 4Q10 0 20 4v14Q10 17 1 21z" fill="#e5f3dd" stroke="#3f7d28" />
      <path d="M6 6l9 9M15 6l-9 9" stroke="#1f6a16" strokeWidth="3" />
    </svg>
  ),
  x: (
    <svg width="34" height="34" viewBox="0 0 34 34">
      <path d="M2 2h7l22 30h-7z" fill="#7a0a86" stroke="#fff" />
      <path d="M30 2L18 16M14 20L3 32" stroke="#7a0a86" strokeWidth="1.5" />
    </svg>
  )
};

const Orb = () => (
  <svg width="38" height="38" viewBox="0 0 38 38">
    <circle cx="19" cy="19" r="18" fill="#245a8e" stroke="#7fb2d8" />
    <ellipse cx="19" cy="11" rx="14" ry="9" fill="#8ab5d2" opacity=".7" />
    <path d="M10 11q4-3 8-1l-2 8q-4-2-8 0z" fill="#ee5a24" />
    <path d="M20 10q4 2 9-1l-2 8q-4 3-9 1z" fill="#8fc73e" />
    <path d="M8 20q4-2 8 0l-2 8q-4-2-8 0z" fill="#3a9be0" />
    <path d="M18 20q4 2 9-1l-2 8q-5 3-9 1z" fill="#fcc62c" />
  </svg>
);

/* ---------- sections ---------- */

function Menu({ label, at = 0, end }) {
  return (
    <MenuItem $end={end}>
      {at === null ? label : <>{label.slice(0, at)}<u>{label[at]}</u>{label.slice(at + 1)}</>}
    </MenuItem>
  );
}

function Header() {
  return (
    <TopStrip>
      <MenuBar>
        <Menu label="File" />
        <Menu label="Edit" />
        <Menu label="Actions" />
        <Menu label="Options" at={1} />
        <Menu label="Analysis" at={null} />
        <Menu label="DFM" at={null} />
        <Menu label="Step" />
        <Menu label="Rout" />
        <Menu label="Windows" />
        <Menu label="Help" at={null} end />
      </MenuBar>
      <Brand $in>
        <Frontline />
        <Product>
          Genesis 2000
          <em>Graphic Editor</em>
        </Product>
        <Stamp>{"30 Dec 2022\n 10:36 PM"}</Stamp>
      </Brand>
    </TopStrip>
  );
}

function Layers() {
  return (
    <Side>
      <JobInfo>Job : 4s7md26ga0</JobInfo>
      <JobInfo>Step: cam</JobInfo>
      <MatrixSlot>
        <Button>Job Matrix ...</Button>
      </MatrixSlot>
      <LayerPane>
        <LayerColumn>
          {groups.map(group => (
            <LayerGroup key={group[0].name}>
              {group.map(l => (
                <LayerRow key={l.name} $bg={l.bg || CYAN}>
                  <input type="checkbox" id={`layer-${l.name}`} defaultChecked={l.on} />
                  <Swatch $color={l.color} />
                  <label htmlFor={`layer-${l.name}`}>
                    {l.name}
                    {l.hand && <Hand />}
                    {l.cell && <Cell />}
                  </label>
                </LayerRow>
              ))}
            </LayerGroup>
          ))}
        </LayerColumn>
      </LayerPane>
    </Side>
  );
}

const checklistGlass =
  "linear-gradient(180deg, rgba(255,255,255,.25) 0, rgba(255,255,255,0) 8px), linear-gradient(#0a0a0a, #333) 0 100% / 100% 7px no-repeat, linear-gradient(90deg, #3c4042 0, #77797a 10%, #5c5e5f 26%, #0b0b0b 34%, #000 56%, #86cde6 59%, #7bbfda 66%, #5c9db8 68%, #86cde6 70%, #a9d8e8 80%, #7fb7d0 100%)";

function Checklist() {
  return (
    <ChecklistGlass $x={1529} $y={87} $w={391} $h={725} $glass={checklistGlass}>
      <GlassTitle $h={27}>
        <XIcon />
        <span>Checklist Editor</span>
        <GlassClose $bg="rgba(160, 200, 220, .5)" aria-label="Close checklist">
          <Cross />
        </GlassClose>
      </GlassTitle>
      <Client>
        <CheckMenu>
          <Menu label="File" />
          <Menu label="Edit" />
          <Menu label="Run" />
        </CheckMenu>
        <ListName>fp-checklist</ListName>
        <Cards>
          <CardColumn>
            {checks.map((c, i) => (
              <Card key={c.erf}>
                <CardHead>
                  <CardName>
                    <Tick>
                      <input type="checkbox" defaultChecked />
                      <svg width="10" height="11" viewBox="0 0 10 11">
                        <path d="M1 5l2 5 6-9" fill="none" stroke="#b8105c" strokeWidth="2" />
                      </svg>
                    </Tick>
                    <SignalIcon />
                    {c.title}
                  </CardName>
                  <Button $w={44} $h={29} $thin>ERF:</Button>
                  <Row>
                    <FieldBox $in $tight $h={28}>
                      <Caret dotted />
                      <ErfInput defaultValue={c.erf} aria-label={`ERF model ${i + 1}`} />
                    </FieldBox>
                  </Row>
                  <IconPad aria-label="Help">
                    <Question />
                  </IconPad>
                </CardHead>
                <CardButtons>
                  <SerifButton $h={23}>Parameters...</SerifButton>
                  <SerifButton $h={23}>Ranges...</SerifButton>
                  <SerifButton $h={23}>Online...</SerifButton>
                </CardButtons>
                <CardRun>
                  <IconPad $tone="green" aria-label="Run"><Runner /></IconPad>
                  <IconPad $tone="green" aria-label="Run global"><Runner /></IconPad>
                  <IconPad $tone="green" aria-label="Run profile"><Runner framed /></IconPad>
                  <RunDate>{`30 Dec 2022\n22:24:28 - Took ${c.took}`}</RunDate>
                  <IconPad $tone="green" aria-label="Show results"><Magnifier /></IconPad>
                  <Flag $color={c.flag}>{c.flag === "#ff1a1a" ? "!!" : ""}</Flag>
                </CardRun>
                <CardNote>{c.note}</CardNote>
              </Card>
            ))}
          </CardColumn>
          <Scroll t="green" before={30} size={70} />
        </Cards>
        <Row $h={28} $pad="1px">
          <Button $h={26}> </Button>
        </Row>
      </Client>
    </ChecklistGlass>
  );
}

const histGlass =
  "linear-gradient(180deg, rgba(255,255,255,.3) 0, rgba(255,255,255,0) 10px), linear-gradient(180deg, rgba(0,0,0,0) 45%, #111 60%) 0 0 / 6px 100% no-repeat, linear-gradient(180deg, #8cc6dc 0, #9ad0e2 60%, #20282c 75%, #000 100%) 100% 28px / 7px 100% no-repeat, linear-gradient(180deg, #0a0a0a, #222) 0 100% / 100% 8px no-repeat, linear-gradient(100deg, #8ab8e8 0, #7fb1e0 10%, #7db265 15%, #86a878 20%, #303530 26%, #0c0c0c 32%, #0c0c0c 44%, #86c2cc 47%, #9ad5da 100%)";

function Histogram() {
  return (
    <Glass $x={1317} $y={252} $w={477} $h={574} $glass={histGlass}>
      <GlassTitle $h={28}>
        <XIcon />
        <span>Results histogram</span>
        <GlassClose $bg="rgba(150, 195, 215, .6)" aria-label="Close histogram">
          <Cross />
        </GlassClose>
      </GlassTitle>
      <Client $tone="green">
        <HistBody>
          <HistSide>
            <Radios>
              {["Count", "Average", "Sum", "Min", "Max"].map(name => (
                <Radio key={name}>
                  <input type="radio" name="stat" defaultChecked={name === "Min"} />
                  {name}
                </Radio>
              ))}
            </Radios>
            <ListArea>
              <List $in>
                <ListRow $on><span>Spacing</span></ListRow>
              </List>
              <Scroll />
            </ListArea>
            <Row $h={32} $gap={4} $pad="0 1px">
              <DelButton />
              <RefButton />
            </Row>
          </HistSide>
          <HistMain>
            <ChartTitle>Size(Spacing) / Min(Spacing)</ChartTitle>
            <Bars>
              {bars.map(b => (
                <BarColumn key={b.value} $low={b.low}>
                  {b.value}
                  <Bar style={{ height: b.height }} />
                </BarColumn>
              ))}
            </Bars>
            <Ranges>
              {bars.map(b => (
                <Range key={b.value}>{b.range}</Range>
              ))}
            </Ranges>
            <Row $h={21}>
              <Wide>
                <Scroll flat />
              </Wide>
            </Row>
            <HistLower>
              <ShortList>
                <List $in>
                  <ListRow $on><span>Spacing</span></ListRow>
                  <ListRow><span>PTH</span></ListRow>
                </List>
                <Scroll />
              </ShortList>
              <Resolution>
                <label htmlFor="resolution">Resolution</label>
                <output>0.1</output>
                <input id="resolution" type="range" defaultValue="0" />
              </Resolution>
            </HistLower>
          </HistMain>
        </HistBody>
        <Sash>
          <Knob $tone="green" />
        </Sash>
        <MapBox>
          <PanelMap />
        </MapBox>
        <Row $h={48} $gap={3} $pad="0 6px 0 5px">
          <DelButton h={38} />
          <RefButton h={38} />
          <Measure>291 measurements for 2 layers</Measure>
          <Button $w={38} $h={38} aria-label="Copy to layer"><MoveIcon /></Button>
          <Button $w={38} $h={38} aria-label="Copy from layer"><MoveIcon back /></Button>
        </Row>
        <Row $h={29} $pad="1px" $bg={CYAN}>
          <Button $h={26}>Close</Button>
        </Row>
      </Client>
    </Glass>
  );
}

const viewerGlass =
  "linear-gradient(180deg, rgba(255,255,255,.25) 0, rgba(255,255,255,0) 9px), linear-gradient(180deg, #8e98a0 0, #3f7f92 12%, #6a96b4 60%, #8fb5cc 100%) 0 0 / 7px 100% no-repeat, linear-gradient(180deg, #222 0, #7c1016 25%, #300 50%, #701016 62%, #111 72%, #c8d8d8 86%, #9cc8dc 100%) 100% 30px / 7px 100% no-repeat, linear-gradient(#a2c6d8, #b4d6e4) 0 100% / 100% 8px no-repeat, radial-gradient(ellipse 34px 16px at 208px 4px, #c9141c 70%, transparent), radial-gradient(ellipse 62px 20px at 330px 0, #cc141c 75%, transparent), radial-gradient(ellipse 50px 16px at 296px 30px, #cc141c 70%, transparent), radial-gradient(ellipse 40px 14px at 420px 30px, #b0141c 50%, transparent), linear-gradient(90deg, #5c6063 0, #999da0 6%, #9da2a4 20%, #56b9ba 24%, #58c0c0 28%, #141414 30%, #101010 88%, #7d1c20 100%)";

function Viewer() {
  return (
    <Glass $x={1} $y={637} $w={509} $h={403} $glass={viewerGlass}>
      <GlassTitle $h={28}>
        <XIcon />
        <span>Results viewer</span>
        <GlassClose $bg="linear-gradient(#c8505a, #b01420)" aria-label="Close viewer">
          <Cross />
        </GlassClose>
      </GlassTitle>
      <Client $tone="green">
        <Heading>
          <HeadingText $tone="green">Solder Mask Checks</HeadingText>
        </Heading>
        <Split>
          <LayersSide>
            <LayersHead>
              <div><Button $w={47} $italic $thin>None</Button></div>
              <h3>Layers</h3>
              <div><Button $w={38} $italic $thin>All</Button></div>
            </LayersHead>
            <ListArea>
              <List $in $tone="green">
                <ListRow $on $tone="green"><span>ts</span></ListRow>
                <ListRow $on $tone="green"><span>bs</span></ListRow>
              </List>
              <Scroll t="green" />
            </ListArea>
            <FlatScroll>
              <Scroll flat t="green" />
            </FlatScroll>
            <ReplaceSlot>
              <Option name="Layer mode" value="Replace layers" h={29} />
            </ReplaceSlot>
          </LayersSide>
          <CategorySide>
            <Row $h={30} $bg={CYAN}>
              <Button $w={208} $h={30} $italic>Categories (23)</Button>
              <Grow>Meas:</Grow>
              <Option name="Meas" value="All" w={60} h={27} />
            </Row>
            <ListArea>
              <List $in $tone="green">
                {categories.map((c, i) => (
                  <ListRow key={c} $on={i === 0} $tone="green"><span>{c}</span></ListRow>
                ))}
              </List>
              <Scroll t="green" size={25} after={75} />
            </ListArea>
            <FlatScroll $tall>
              <Scroll flat t="green" size={80} after={20} />
            </FlatScroll>
            <Row $h={25} $gap={4} $pad="0 2px 0 1px">
              <Button $w={53} $h={24}>First</Button>
              <Button $w={44} $h={24}>&lt;---</Button>
              <Button $w={44} $h={24}>---&gt;</Button>
              <Button $w={44} $h={24}>Last</Button>
              <IndexField>
                Index:
                <FieldBox $in $tone="green" $h={23}>
                  <Caret />
                  <input defaultValue="4" />
                </FieldBox>
              </IndexField>
            </Row>
            <Row $h={34} $gap={4}>
              <ZoomSlot>
                <Option name="Zoom mode" value="Auto Zoom" w={117} h={29} />
                <SvLabel>Sv:</SvLabel>
                <SvColor>
                  <Option name="Severity" value="" tone="lime" h={28} />
                </SvColor>
              </ZoomSlot>
              <Check>
                <TickBox $tone="green" type="checkbox" />
                Show All
              </Check>
            </Row>
            <Row $h={33} $gap={4} $pad="0 2px 0 0" $justify="flex-end">
              <DelButton />
              <RefButton />
              <Button $w={34} $h={30}>
                <Face $wide>
                  UNDO
                  <svg width="9" height="10" viewBox="0 0 9 10">
                    <path d="M2 3h3q3 0 3 3t-4 3M4 0L1 3l3 3" fill="none" stroke="#000" strokeWidth="3" />
                    <path d="M2 3h3q3 0 3 3t-4 3M4 0L1 3l3 3" fill="none" stroke="#ffee20" strokeWidth="1.5" />
                  </svg>
                </Face>
              </Button>
            </Row>
          </CategorySide>
        </Split>
        <StatusLine $align="center" $bg="#52cdae">ts 3.002mil  r31.535</StatusLine>
        <StatusLine $bg="#ffffcc">{"ERF--> ar_pth = 7 9 10"}</StatusLine>
        <Tools>
          <Button $h={30}>Close</Button>
          {Object.keys(toolArt).map(name => (
            <IconPad key={name} $active={name === "chart"} aria-label={name}>
              <svg width="23" height="23" viewBox="0 0 23 23">{toolArt[name]}</svg>
            </IconPad>
          ))}
        </Tools>
      </Client>
    </Glass>
  );
}

function TrayIcons() {
  return (
    <>
      <svg width="16" height="16" viewBox="0 0 16 16">
        <path d="M1 7h14v8H1z" fill="#c8c8c8" stroke="#eee" />
        <path d="M3 9.5h10M3 12.5h10" stroke="#555" strokeDasharray="1.5 1" />
        <path d="M3 5q2-3 5-2t5-2" fill="none" stroke="#ccc" />
      </svg>
      <svg width="16" height="16" viewBox="0 0 16 16">
        <circle cx="8" cy="8" r="7" fill="#1c2fb8" stroke="#dde4f5" />
        <path d="M6 6q0-2 2-2t2 2-2 2.5V10M8 11v2" fill="none" stroke="#fff" strokeWidth="1.6" />
      </svg>
      <svg width="9" height="20" viewBox="0 0 9 20">
        <path d="M3 1.5h5v3H3zM1 3.5h5v3H1z" fill="#0c2346" stroke="#fff" />
        <path d="M1 15h7l-3.5 3z" fill="#fff" />
      </svg>
      <svg width="8" height="5" viewBox="0 0 8 5"><path d="M0 4l4-4 4 4z" fill="#fff" /></svg>
      <svg width="16" height="16" viewBox="0 0 16 16">
        <path d="M2 1v14" stroke="#fff" />
        <path d="M4 2h4l1 1h5v6H4z" fill="#fff" />
        <circle cx="11" cy="11" r="4.5" fill="#d8301c" />
        <path d="M9 9l4 4M13 9l-4 4" stroke="#fff" strokeWidth="1.5" />
      </svg>
      <svg width="16" height="16" viewBox="0 0 16 16">
        <path d="M1 6h2l4-4v12l-4-4H1z" fill="#fff" />
        <path d="M9 6q1 2 0 4M11 4q3 4 0 8M13 3q4 5 0 10" fill="none" stroke="#fff" />
      </svg>
      <svg width="16" height="16" viewBox="0 0 16 16">
        <path d="M5 4h10v8H5zM8 14h6M1 2v4h3V2M2.5 6v8h4" fill="none" stroke="#fff" strokeWidth="1.3" />
      </svg>
    </>
  );
}

export default function App() {
  return (
    <>
      <GlobalStyle />
      <Desktop>
        <TitleBar>
          <TitleIcon><XIcon /></TitleIcon>
          <TitleText>Graphic Editor 9.07b2 (00@HY-HYCAM-PC411 - Windows, pid:5536)</TitleText>
          <Caption $w={29} $first aria-label="Minimize">
            <svg width="12" height="5" viewBox="0 0 12 5"><path d="M.5.5h11v4H.5z" fill="#fff" stroke="#3a4558" /></svg>
          </Caption>
          <Caption $w={27} aria-label="Maximize">
            <svg width="12" height="10" viewBox="0 0 12 10"><path d="M1.5 1.5h9v7h-9z" fill="none" stroke="#fff" strokeWidth="2" /><path d="M4 4h4v2H4z" fill="#3a4558" /></svg>
          </Caption>
          <Caption $w={47} $close aria-label="Close"><Cross /></Caption>
        </TitleBar>
        <Body>
          <Workspace>
            <Header />
            <Middle>
              <Layers />
              <CanvasArea>
                <Board />
              </CanvasArea>
              <Overview>
                <Coords>{"X = 4.990714\"\nY = 0.144223\""}</Coords>
              </Overview>
            </Middle>
            <Prompt>
              <PromptText>{"selection ; <M1><M1> Global selection"}</PromptText>
              <UnitSlot>
                <Option name="Units" value="Inch" tone="green" h={27} />
              </UnitSlot>
            </Prompt>
            <Info>
              <InfoText $tone="ice">
                sig3b,#4025,Line,XS=1.9781,YS=0.38184,XE=2.0491,YE=0.38184,r20.1,NEG,Ang=0
              </InfoText>
            </Info>
          </Workspace>
          <WindowEdge />
        </Body>
        <Taskbar>
          <Start aria-label="Start"><Orb /></Start>
          <Tasks>
            <Task aria-label="Shell">{taskIcons.shell}</Task>
            <Task aria-label="Notepad">{taskIcons.note}</Task>
            <Task aria-label="Genesis">{taskIcons.g}</Task>
            <Task aria-label="Messenger">{taskIcons.bird}</Task>
            <Task aria-label="Files">{taskIcons.floppy}</Task>
            <Task aria-label="Planner">{taskIcons.p}</Task>
            <Task aria-label="Word" $w={54} $stack>{taskIcons.word}</Task>
            <Task aria-label="Excel" $w={54} $stack>{taskIcons.excel}</Task>
            <Task aria-label="Disc"><Disc /></Task>
            <Task aria-label="X server" $w={51} $active $stack>{taskIcons.x}</Task>
            <Task aria-label="Disc tools"><Disc /></Task>
          </Tasks>
          <Tray>
            <TrayIcons />
            <TrayEnd>
              <Clock>22:56<br />2022/12/30</Clock>
              <ShowDesktop aria-label="Show desktop" />
            </TrayEnd>
          </Tray>
        </Taskbar>
        <Checklist />
        <Histogram />
        <Viewer />
      </Desktop>
    </>
  );
}
